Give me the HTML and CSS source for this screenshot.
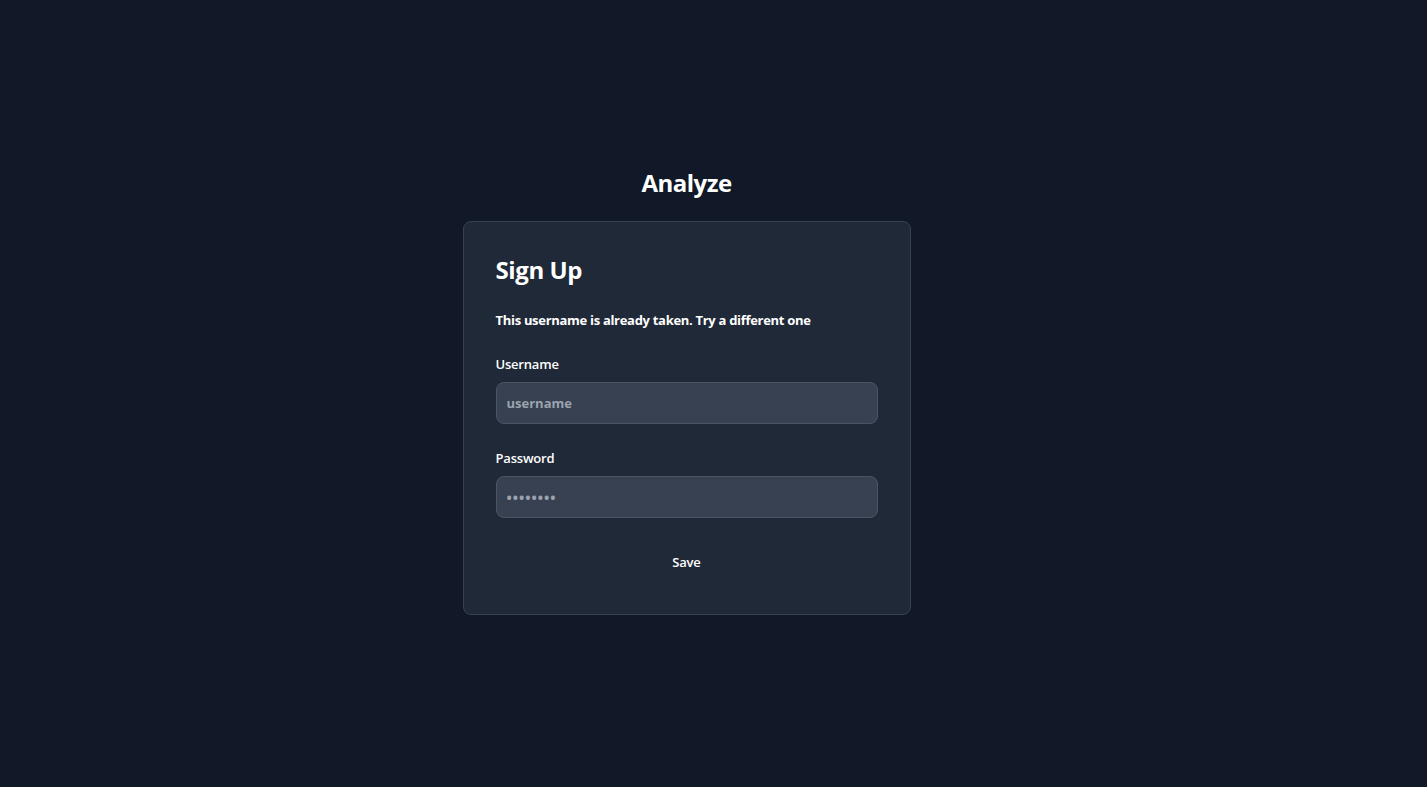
FILE: index.html
```
<!DOCTYPE html>
<html lang="en">
<head>
<meta charset="utf-8">
<title>Analyze - Sign Up</title>
<link rel="stylesheet" href="styles.css">
</head>
<body>
<main class="page">
  <h1 class="brand">Analyze</h1>
  <form class="card">
    <h2 class="card-title">Sign Up</h2>
    <p class="error">This username is already taken. Try a different one</p>
    <div class="field">
      <label class="label" for="username">Username</label>
      <input class="input" id="username" type="text" placeholder="username">
    </div>
    <div class="field">
      <label class="label" for="password">Password</label>
      <input class="input input-secret" id="password" type="password" placeholder="••••••••">
    </div>
    <div class="actions">
      <button class="btn" type="button">Save</button>
    </div>
  </form>
</main>
</body>
</html>
```
FILE: styles.css
```
* { box-sizing: border-box; }
html, body {
  margin: 0;
  padding: 0;
  background: #111827;
  color: #ffffff;
  font-family: "Open Sans", "Noto Sans", "Liberation Sans", sans-serif;
}
.page {
  min-height: 100vh;
  display: flex;
  flex-direction: column;
  align-items: center;
  padding: 167px 54px 0 0;
}
.brand {
  margin: 0 0 22px;
  font-size: 24px;
  line-height: 32px;
  font-weight: 700;
  letter-spacing: -0.5px;
}
.card {
  width: 448px;
  background: #1f2937;
  border: 1px solid #374151;
  border-radius: 8px;
  padding: 32px;
  display: flex;
  flex-direction: column;
}
.card-title {
  margin: 0 0 24px;
  font-size: 24px;
  line-height: 32px;
  font-weight: 700;
  letter-spacing: -0.4px;
}
.error {
  margin: 0 0 24px;
  font-size: 13px;
  line-height: 20px;
  font-weight: 700;
  letter-spacing: -0.3px;
}
.field {
  display: flex;
  flex-direction: column;
  margin-bottom: 24px;
}
.label {
  font-size: 13px;
  line-height: 20px;
  font-weight: 600;
  margin-bottom: 8px;
  letter-spacing: -0.2px;
}
.input {
  height: 42px;
  width: 100%;
  background: #374151;
  border: 1px solid #4b5563;
  border-radius: 8px;
  padding: 0 10px;
  font-family: inherit;
  font-size: 13px;
  font-weight: 700;
  color: #ffffff;
  outline: none;
}
.input-secret {
  font-size: 14px;
  letter-spacing: 1px;
}
.input::placeholder {
  color: #9ca3af;
}
.actions {
  display: flex;
  justify-content: center;
}
.btn {
  background: transparent;
  border: none;
  color: #ffffff;
  font-family: inherit;
  font-size: 13px;
  line-height: 20px;
  font-weight: 600;
  padding: 10px 20px;
  letter-spacing: -0.2px;
  cursor: pointer;
}
```
